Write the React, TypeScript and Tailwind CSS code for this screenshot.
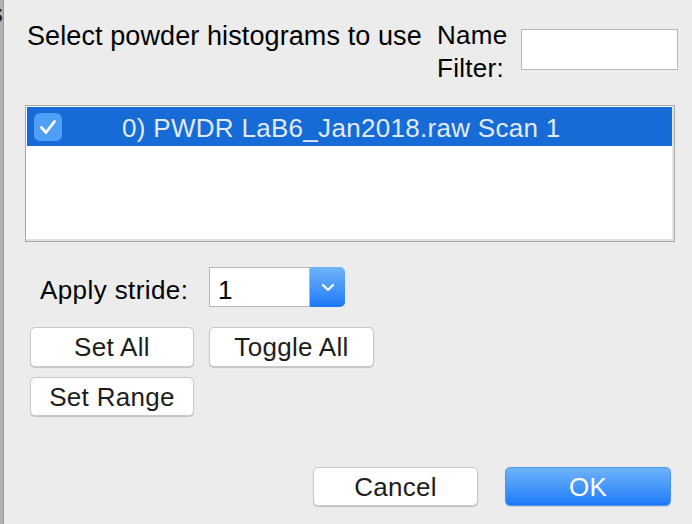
import React from 'react';

const Check: React.FC = () => (
  <svg width="18" height="16" viewBox="0 0 18 16" fill="none">
    <path
      d="M2.5 8.5 L7 13.5 L15.5 2.5"
      stroke="white"
      strokeWidth="2.8"
      strokeLinecap="round"
      strokeLinejoin="round"
    />
  </svg>
);

const Chevron: React.FC = () => (
  <svg width="14" height="9" viewBox="0 0 14 9" fill="none">
    <path
      d="M2 2 L7 7 L12 2"
      stroke="white"
      strokeWidth="2.2"
      strokeLinecap="round"
      strokeLinejoin="round"
    />
  </svg>
);

const PushButton: React.FC<{ label: string; className?: string }> = ({
  label,
  className = '',
}) => (
  <button
    className={`flex items-center justify-center bg-white border border-[#c8c8c8] rounded-[5px] shadow-[0_1px_1px_rgba(0,0,0,0.18)] text-[26px] leading-[32px] tracking-[0.3px] text-[#1d1d1d] ${className}`}
  >
    {label}
  </button>
);

const App: React.FC = () => {
  return (
    <div className="w-[692px] h-[524px] bg-[#ececec] flex overflow-hidden font-['Liberation_Sans',Arial,sans-serif]">
      {/* edge of the window behind */}
      <div className="w-[4px] h-full bg-[#b3b3b3] border-r border-[#979797] overflow-hidden shrink-0">
        <span className="block -ml-[10px] text-[26px] leading-[26px] text-[#222]">
          s
        </span>
      </div>

      <div className="flex-1 flex flex-col">
        {/* header */}
        <div className="flex items-start pt-[19px]">
          <div className="w-[410px] ml-[23px] mt-px text-[27px] leading-[32px] tracking-[0.1px] text-black whitespace-nowrap">
            Select powder histograms to use
          </div>
          <div className="w-[84px] text-[26px] leading-[33px] tracking-[0.3px] text-black">
            <div>Name</div>
            <div>Filter:</div>
          </div>
          <input
            className="w-[157px] h-[41px] mt-[10px] bg-white border border-[#b8b8b8] outline-none"
            type="text"
          />
        </div>

        {/* histogram list */}
        <div className="ml-[21px] mt-[20px] w-[650px] h-[137px] border border-[#a9a9a9] bg-[#e2e2e2] pr-[2px] pb-[2px]">
          <div className="w-full h-full bg-white pt-px pl-px">
            <div className="h-[39px] bg-[#166bd6] flex items-center">
              <div className="ml-[7px] w-[28px] h-[28px] rounded-[6px] bg-[#4f9ff7] flex items-center justify-center">
                <Check />
              </div>
              <span className="ml-[60px] mt-[3px] text-[26px] leading-[32px] tracking-[0.3px] text-[#e3eaf7] whitespace-nowrap">
                0) PWDR LaB6_Jan2018.raw Scan 1
              </span>
            </div>
          </div>
        </div>

        {/* stride */}
        <div className="flex items-start mt-[25px]">
          <span className="ml-[36px] mt-[7px] w-[169px] text-[26px] leading-[32px] tracking-[0.4px] text-black whitespace-nowrap">
            Apply stride:
          </span>
          <div className="flex h-[40px]">
            <div className="w-[101px] h-full bg-white border border-[#b8b8b8] pl-[8px] pt-[6px] text-[26px] leading-[32px] text-black">
              1
            </div>
            <div className="w-[35px] h-full rounded-r-[5px] bg-linear-to-b from-[#70b3f9] to-[#1a78f8] flex items-center justify-center">
              <Chevron />
            </div>
          </div>
        </div>

        {/* selection buttons */}
        <div className="flex mt-[20px] ml-[26px] gap-[15px]">
          <PushButton label="Set All" className="w-[164px] h-[40px]" />
          <PushButton label="Toggle All" className="w-[165px] h-[40px]" />
        </div>
        <div className="flex mt-[10px] ml-[26px]">
          <PushButton label="Set Range" className="w-[164px] h-[39px]" />
        </div>

        {/* dialog buttons */}
        <div className="flex mt-auto mb-[18px] ml-[309px] gap-[27px]">
          <PushButton label="Cancel" className="w-[165px] h-[39px]" />
          <button className="w-[166px] h-[39px] rounded-[5px] border border-[#4d97ef] bg-linear-to-b from-[#6db3f9] to-[#1b7af9] text-white text-[26px] leading-[32px] tracking-[0.3px] flex items-center justify-center shadow-[0_1px_1px_rgba(0,0,0,0.12)]">
            OK
          </button>
        </div>
      </div>
    </div>
  );
};

export default App;
